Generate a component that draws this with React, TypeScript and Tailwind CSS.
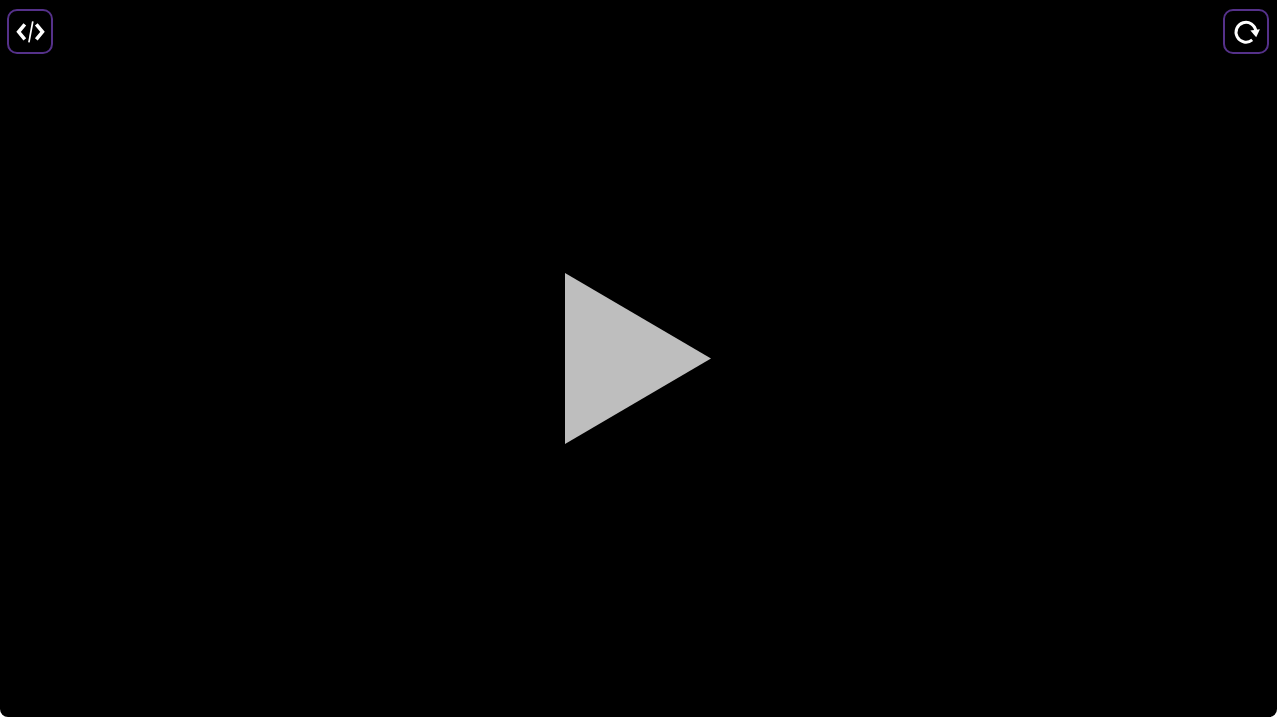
import React from 'react';

interface ToolButtonProps {
  label: string;
  children: React.ReactNode;
}

const ToolButton: React.FC<ToolButtonProps> = ({ label, children }) => (
  <button
    type="button"
    aria-label={label}
    className="flex h-[45px] w-[46px] items-center justify-center rounded-[10px] border-2 border-[#55318a] bg-black text-white"
  >
    {children}
  </button>
);

const CodeIcon: React.FC = () => (
  <svg width="32" height="32" viewBox="0 0 32 32" fill="none" stroke="currentColor" aria-hidden="true" className="shrink-0">
    <path d="M10.8 8.3 4.6 15.8l6.2 7.5M22.3 8.3l6.2 7.5-6.2 7.5" strokeWidth="3.5" />
    <path d="M18.8 5.3 14.9 26.3" strokeWidth="1.7" />
  </svg>
);

const RestartIcon: React.FC = () => (
  <svg width="32" height="32" viewBox="0 0 32 32" fill="none" aria-hidden="true" className="shrink-0">
    <path d="M25.8 15.2A9.9 9.9 0 1 0 22.2 23.9" stroke="currentColor" strokeWidth="3" />
    <path d="M20.4 14.4 29.9 13.2 26.2 21.2Z" fill="currentColor" />
  </svg>
);

const App: React.FC = () => {
  return (
    <main className="h-screen bg-white pr-[3px] pb-[3px]">
      <div className="grid h-full grid-cols-1 grid-rows-1 rounded-b-lg bg-black">
        <header className="z-10 col-start-1 row-start-1 flex justify-between self-start pt-[9px] pr-2 pl-[7px]">
          <ToolButton label="Show code">
            <CodeIcon />
          </ToolButton>
          <ToolButton label="Restart">
            <RestartIcon />
          </ToolButton>
        </header>

        <button
          type="button"
          aria-label="Play"
          className="col-start-1 row-start-1 place-self-center text-[#bebebe]"
        >
          <svg width="147" height="171" viewBox="0 0 147 171" aria-hidden="true">
            <path d="M0 0 146 85.5 0 171Z" fill="currentColor" />
          </svg>
        </button>
      </div>
    </main>
  );
};

export default App;
